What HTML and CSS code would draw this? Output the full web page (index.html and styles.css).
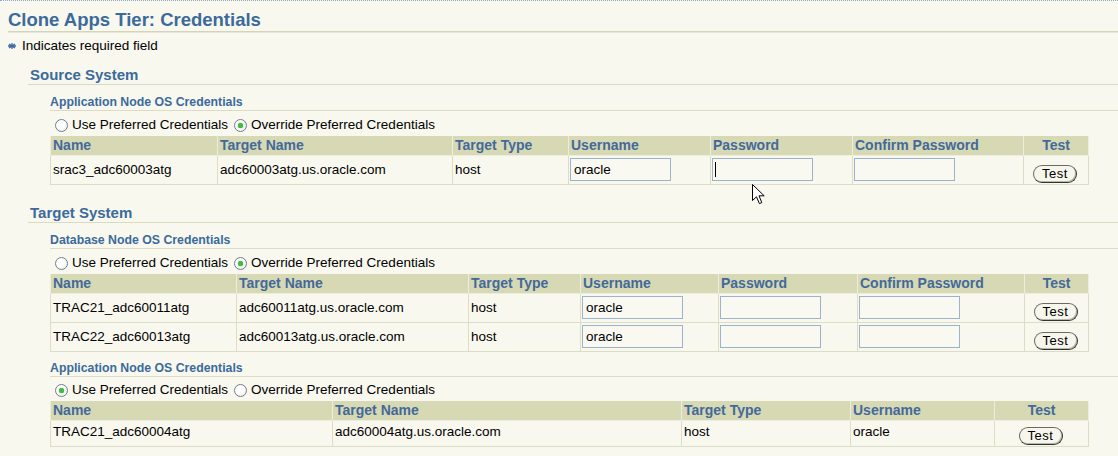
FILE: index.html
```html
<!DOCTYPE html>
<html lang="en">
<head>
  <meta charset="UTF-8" />
  <title>Clone Apps Tier: Credentials</title>
  <link rel="stylesheet" href="styles.css">
</head>
<body>
  <h1 class="page-title">Clone Apps Tier: Credentials</h1>
  <div class="req-note">
    <svg class="req-star" width="8" height="6" viewBox="0 0 8 6"><path d="M0 3h8M1 1l6 4M1 5l6-4M4 0v6" stroke="#3f6a9e" stroke-width="1.3"/></svg>Indicates required field
  </div>

  <section class="sys">
    <h2 class="sys-title">Source System</h2>
    <div class="cred-block">
      <h3 class="cred-title">Application Node OS Credentials</h3>
      <div class="cred-choice">
        <label class="radio"><span class="radio-dot"></span>Use Preferred Credentials</label>
        <label class="radio"><span class="radio-dot on"></span>Override Preferred Credentials</label>
      </div>
      <table class="cred-table">
        <colgroup>
          <col style="width:167px"><col style="width:235px"><col style="width:116px"><col style="width:142px"><col style="width:142px"><col style="width:171px"><col style="width:65px">
        </colgroup>
        <tr><th>Name</th><th>Target Name</th><th>Target Type</th><th>Username</th><th>Password</th><th>Confirm Password</th><th class="mid">Test</th></tr>
        <tr>
          <td>srac3_adc60003atg</td><td>adc60003atg.us.oracle.com</td><td>host</td>
          <td><input class="field" type="text" value="oracle"></td>
          <td class="focus-cell"><input class="field" type="password"><span class="caret"></span></td>
          <td><input class="field" type="password"></td>
          <td class="btn-cell"><button class="test-btn">Test</button></td>
        </tr>
      </table>
    </div>
  </section>

  <section class="sys">
    <h2 class="sys-title">Target System</h2>
    <div class="cred-block">
      <h3 class="cred-title">Database Node OS Credentials</h3>
      <div class="cred-choice">
        <label class="radio"><span class="radio-dot"></span>Use Preferred Credentials</label>
        <label class="radio"><span class="radio-dot on"></span>Override Preferred Credentials</label>
      </div>
      <table class="cred-table">
        <colgroup>
          <col style="width:186px"><col style="width:232px"><col style="width:112px"><col style="width:138px"><col style="width:139px"><col style="width:167px"><col style="width:64px">
        </colgroup>
        <tr><th>Name</th><th>Target Name</th><th>Target Type</th><th>Username</th><th>Password</th><th>Confirm Password</th><th class="mid">Test</th></tr>
        <tr>
          <td>TRAC21_adc60011atg</td><td>adc60011atg.us.oracle.com</td><td>host</td>
          <td><input class="field" type="text" value="oracle"></td>
          <td><input class="field" type="password"></td>
          <td><input class="field" type="password"></td>
          <td class="btn-cell"><button class="test-btn">Test</button></td>
        </tr>
        <tr>
          <td>TRAC22_adc60013atg</td><td>adc60013atg.us.oracle.com</td><td>host</td>
          <td><input class="field" type="text" value="oracle"></td>
          <td><input class="field" type="password"></td>
          <td><input class="field" type="password"></td>
          <td class="btn-cell"><button class="test-btn">Test</button></td>
        </tr>
      </table>
    </div>

    <div class="cred-block">
      <h3 class="cred-title">Application Node OS Credentials</h3>
      <div class="cred-choice">
        <label class="radio"><span class="radio-dot on"></span>Use Preferred Credentials</label>
        <label class="radio"><span class="radio-dot"></span>Override Preferred Credentials</label>
      </div>
      <table class="cred-table">
        <colgroup>
          <col style="width:282px"><col style="width:349px"><col style="width:169px"><col style="width:144px"><col style="width:94px">
        </colgroup>
        <tr><th>Name</th><th>Target Name</th><th>Target Type</th><th>Username</th><th class="mid">Test</th></tr>
        <tr class="plain-row">
          <td>TRAC21_adc60004atg</td><td>adc60004atg.us.oracle.com</td><td>host</td><td>oracle</td>
          <td class="btn-cell"><button class="test-btn">Test</button></td>
        </tr>
      </table>
    </div>
  </section>

  <!-- mouse pointer left in the shot -->
  <svg class="pointer" width="13" height="21" viewBox="0 0 13 21"><path d="M0.5 0.5V16.5L4.5 12.8L7.4 19.6L9.8 18.6L7 11.8H12.2Z" fill="#fff" stroke="#000" stroke-width="1" stroke-linejoin="round"/></svg>
</body>
</html>
```

FILE: styles.css
```css
body {
  margin: 0;
  border-top: 1px dotted #8ea8c3;
  background: #f8f8ef;
  color: #000;
  font-family: "Liberation Sans", Arial, sans-serif;
  font-size: 13.5px;
  position: relative;
  min-height: 455px;
}
.page-title {
  margin: 8px 0 0 8px;
  font-size: 18.5px;
  line-height: 22px;
  color: #3b6a9b;
  border-bottom: 1px solid #d3d4b8;
  box-shadow: 0 1px 0 #e6e7d6;
}
.req-note {
  margin-top: 5px;
  padding-left: 8px;
  line-height: 18px;
  display: flex;
  align-items: center;
}
.req-star {
  margin-right: 6px;
}
.sys {
  margin-top: 11px;
}
.sys + .sys {
  margin-top: 19px;
}
.sys-title {
  margin: 0 0 0 28px;
  padding-left: 2px;
  font-size: 15px;
  line-height: 18px;
  color: #3b6a9b;
  border-bottom: 1px solid #d9dac2;
}
.cred-block {
  margin-left: 50px;
}
.cred-title {
  margin: 9px 0 0;
  font-size: 12.3px;
  line-height: 16px;
  color: #3b6a9b;
  border-bottom: 1px solid #dcdcc6;
}
.cred-block + .cred-block .cred-title {
  margin-top: 8px;
}
.cred-block + .cred-block .cred-choice {
  padding-top: 3px;
}
.cred-choice {
  display: flex;
  gap: 6px;
  padding: 4px 0 1px 5px;
  line-height: 20px;
}
.radio {
  display: flex;
  align-items: center;
  gap: 4px;
}
.radio-dot {
  width: 11px;
  height: 11px;
  border: 1px solid #6f7f8f;
  border-radius: 50%;
  background: radial-gradient(circle at 40% 40%, #fff 40%, #e4e4dc 100%);
  display: flex;
  align-items: center;
  justify-content: center;
}
.radio-dot.on::after {
  content: "";
  width: 5px;
  height: 5px;
  border-radius: 50%;
  background: #3fbf3f;
  box-shadow: 0 0 1px #1f8f1f;
}
.cred-table {
  border-collapse: collapse;
  table-layout: fixed;
  width: 1038px;
}
.cred-table th {
  background: #d6d9b4;
  color: #43699a;
  font-size: 14px;
  text-align: left;
  padding: 1px 2px 1px;
  line-height: 17px;
  border: 1px solid #eceedd;
  border-top: 0;
  white-space: nowrap;
}
.cred-table th.mid {
  text-align: center;
}
.cred-table td {
  border: 1px solid #dcddc6;
  padding: 2px 2px 3px;
  line-height: 17px;
  white-space: nowrap;
  vertical-align: middle;
}
.plain-row td {
  padding-top: 2px;
  padding-bottom: 3px;
  vertical-align: top;
}
.field {
  box-sizing: border-box;
  width: 101px;
  height: 23px;
  margin: 0 0 0 -1px;
  padding: 1px 3px;
  border: 1px solid #9db3cc;
  background: #f9f9f2;
  font-family: "Liberation Sans", Arial, sans-serif;
  font-size: 13.5px;
  color: #000;
  display: block;
}
.focus-cell {
  position: relative;
}
.caret {
  position: absolute;
  left: 4px;
  top: 6px;
  width: 1px;
  height: 15px;
  background: #000;
}
.cred-table td.btn-cell {
  text-align: center;
  vertical-align: bottom;
  padding: 6px 0 1px;
}
.test-btn {
  width: 44px;
  height: 18px;
  margin-right: 2px;
  padding: 0 0 1px;
  border: 1px solid #6a6a60;
  border-right-color: #333;
  border-bottom-color: #333;
  border-radius: 9px;
  background: #f6f6ec;
  box-shadow: inset -1px -1px 0 #b8b8aa;
  font-family: "Liberation Sans", Arial, sans-serif;
  font-size: 13px;
  letter-spacing: 0.5px;
  color: #000;
  line-height: 15px;
}
.pointer {
  position: absolute;
  left: 752px;
  top: 183px;
}
```
